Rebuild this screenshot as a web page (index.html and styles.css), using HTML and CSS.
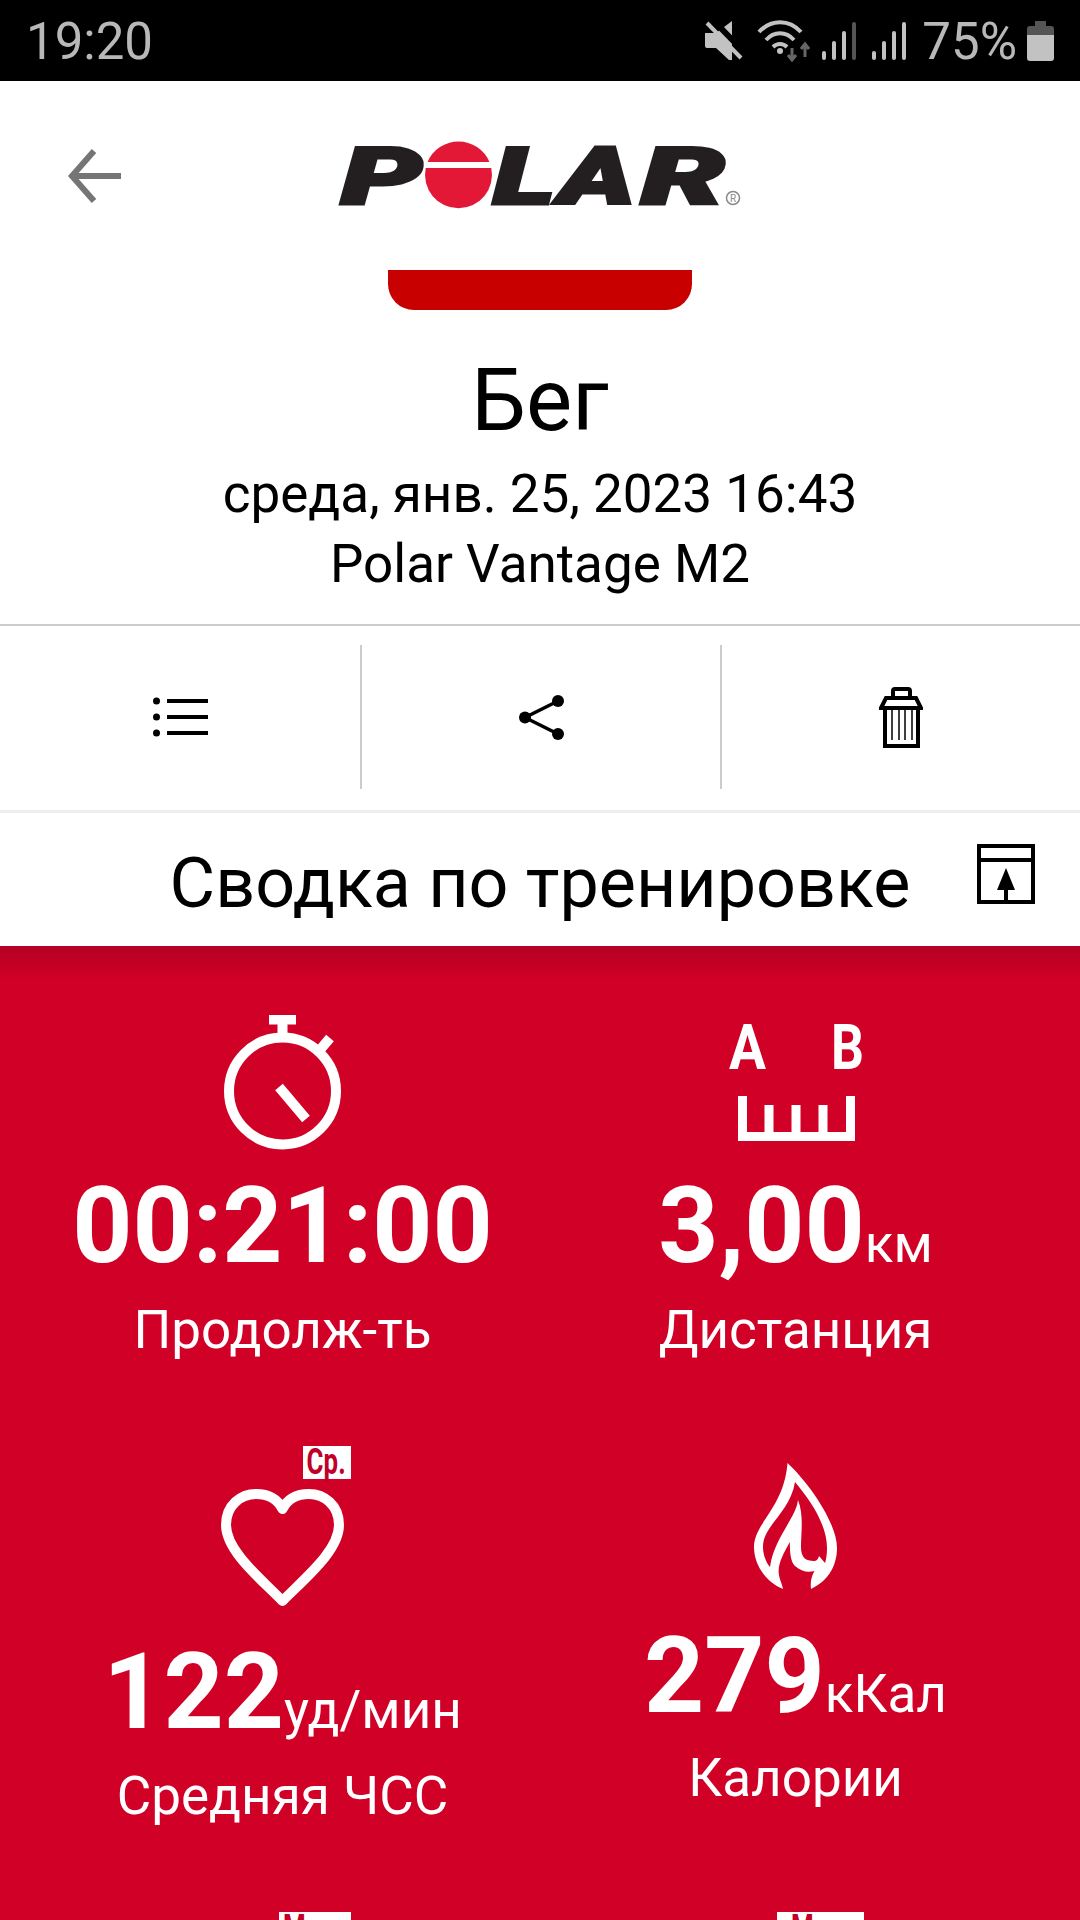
FILE: index.html
```html
<!DOCTYPE html>
<html lang="ru">
<head>
    <meta charset="utf-8">
    <title>Бег</title>
    <link rel="stylesheet" href="styles.css">
</head>
<body>
    <div class="status-bar">
        <span class="status-text">19:20</span>
        <div class="status-right">
            <svg class="ic-mute" viewBox="0 0 40 42">
                <path class="st-fill" d="M0 13 H11 L27 1 V40 L24 40 L11 28 H2 Q0 28 0 26 Z"/>
                <path class="st-cut" d="M6 -2 L40 33"/>
                <path class="st-line" d="M2 3 L36 38"/>
            </svg>
            <svg class="ic-wifi" viewBox="0 0 53 42">
                <path class="st-line" d="M2 12 C14 -1 32 -1 44 12"/>
                <path class="st-line" d="M9 20 C17 11 29 11 37 20"/>
                <path class="st-line" d="M16 27 C20 23 26 23 30 27"/>
                <circle class="st-fill" cx="23" cy="31" r="3"/>
                <path class="st-dark" d="M35 28 V40 M31 35 L35 40 L39 35"/>
                <path class="st-dark" d="M48 37 V24 M44 29 L48 24 L52 29"/>
            </svg>
            <svg class="ic-signal" viewBox="0 0 38 40">
                <rect class="st-fill" x="0" y="30" width="4" height="9" rx="2"/>
                <rect class="st-fill" x="10" y="20" width="4" height="19" rx="2"/>
                <rect class="st-fill" x="20" y="10" width="4" height="29" rx="2"/>
                <rect class="st-bar-dark" x="30" y="1" width="4" height="38" rx="2"/>
            </svg>
            <svg class="ic-signal" viewBox="0 0 38 40">
                <rect class="st-fill" x="0" y="30" width="4" height="9" rx="2"/>
                <rect class="st-fill" x="10" y="20" width="4" height="19" rx="2"/>
                <rect class="st-fill" x="20" y="10" width="4" height="29" rx="2"/>
                <rect class="st-fill" x="30" y="1" width="4" height="38" rx="2"/>
            </svg>
            <span class="status-text status-battery">75%</span>
            <svg class="ic-battery" viewBox="0 0 27 40">
                <path class="st-bar-dark" d="M8 0 H19 V5 H24 Q27 5 27 8 V14 H0 V8 Q0 5 3 5 H8 Z"/>
                <path class="st-fill" d="M0 14 H27 V37 Q27 40 24 40 H3 Q0 40 0 37 Z"/>
            </svg>
        </div>
    </div>

    <header class="top-bar">
        <svg class="back-icon" viewBox="0 0 54 54">
            <path d="M53 27 H5 M26 2 L4 27 L26 52"/>
        </svg>
        <svg class="logo" viewBox="-6 -20 416 106">
            <text class="logo-text" x="3" y="61" textLength="81" lengthAdjust="spacingAndGlyphs">P</text>
            <path class="logo-red" d="M89.600 19 A33.500 33.500 0 0 1 151.400 19 Z"/>
            <path class="logo-red" d="M87.700 25 H153.300 A33.500 33.500 0 1 1 87.700 25 Z"/>
            <text class="logo-text" x="155" y="61" textLength="62" lengthAdjust="spacingAndGlyphs">L</text>
            <text class="logo-text" x="221" y="61" textLength="76" lengthAdjust="spacingAndGlyphs">A</text>
            <text class="logo-text" x="303" y="61" textLength="84" lengthAdjust="spacingAndGlyphs">R</text>
            <circle class="logo-mark" cx="395" cy="55" r="6.500"/>
            <text class="logo-mark-text" x="395" y="59">R</text>
        </svg>
    </header>

    <div class="sport-tab"></div>

    <section class="session">
        <h1>Бег</h1>
        <p>среда, янв. 25, 2023 16:43</p>
        <p>Polar Vantage M2</p>
    </section>

    <div class="actions">
        <div class="action">
            <svg class="ic-list" viewBox="0 0 55 40">
                <circle cx="3.500" cy="4" r="3.500"/>
                <circle cx="3.500" cy="20" r="3.500"/>
                <circle cx="3.500" cy="36" r="3.500"/>
                <rect x="14" y="2" width="41" height="4"/>
                <rect x="14" y="18" width="41" height="4"/>
                <rect x="14" y="34" width="41" height="4"/>
            </svg>
        </div>
        <div class="action">
            <svg class="ic-share" viewBox="0 0 45 45">
                <path class="line" d="M39 6 L6 22.500 L39 39"/>
                <circle cx="6" cy="22.500" r="6"/>
                <circle cx="39" cy="6" r="6"/>
                <circle cx="39" cy="39" r="6"/>
            </svg>
        </div>
        <div class="action">
            <svg class="ic-trash" viewBox="0 0 44 61">
                <path class="line" d="M14 10 V4 Q14 2 16 2 H29 Q31 2 31 4 V10"/>
                <path class="line" d="M2 21 L7 11 H37 L42 21 Z"/>
                <path class="line" d="M6 21 V59 H39 V21"/>
                <path class="thin" d="M13 23 V53 M20 23 V53 M26 23 V53 M33 23 V53"/>
            </svg>
        </div>
    </div>

    <div class="summary-head">
        <h2>Сводка по тренировке</h2>
        <svg class="ic-collapse" viewBox="0 0 58 60">
            <path class="line" d="M2 2 H56 V58 H2 Z M2 16 H56"/>
            <path class="fill" d="M29 24 L38 46 H31 V58 H27 V46 H20 Z"/>
        </svg>
    </div>

    <main class="stats">
        <div class="stat">
            <div class="stat-icon">
                <svg class="ic-watch" viewBox="0 0 117 135">
                    <circle class="line" cx="58.500" cy="76" r="53.500"/>
                    <path class="line" d="M45 4.500 H72 M58.500 9 V22 M95 36 L106 23 M55 72 L82 104"/>
                </svg>
            </div>
            <div class="stat-value">00:21:00</div>
            <div class="stat-label">Продолж-ть</div>
        </div>
        <div class="stat">
            <div class="stat-icon">
                <svg class="ic-ab" viewBox="-10 -15 150 132">
                    <text x="0" y="45" textLength="37" lengthAdjust="spacingAndGlyphs">A</text>
                    <text x="102" y="45" textLength="33" lengthAdjust="spacingAndGlyphs">B</text>
                    <path class="line" d="M13.500 72 V112.500 H121.500 V72 M40 81 V112 M67 81 V112 M94 81 V112"/>
                </svg>
            </div>
            <div class="stat-value">3,00<span class="unit">км</span></div>
            <div class="stat-label">Дистанция</div>
        </div>

        <div class="stat">
            <div class="badge badge-avg"><span>Ср.</span></div>
            <div class="stat-icon stat-icon-heart">
                <svg class="ic-heart" viewBox="0 0 123 117">
                    <path class="line" d="M61.500 112 C40 90 5 62 5 36 C5 16 20 5 35 5 C48 5 57 11 61.500 20 C66 11 75 5 88 5 C103 5 118 16 118 36 C118 62 83 90 61.500 112 Z"/>
                </svg>
            </div>
            <div class="stat-value">122<span class="unit">уд/мин</span></div>
            <div class="stat-label">Средняя ЧСС</div>
        </div>
        <div class="stat">
            <div class="stat-icon stat-icon-flame">
                <svg class="ic-flame" viewBox="0 0 84 127">
                    <path class="flame" d="M33.500 0 C55 20 83 60 83 85 C83 105 72 119 57 126 C56 118 58 112 60.500 108 C53 110 47 108 41 103 C36 98 36 88 35.800 79 C30 90 25 98 24.600 108 C24.600 115 28 120 29 126 C12 119 0 102 0 84 C0 60 30 45 33.500 0 Z M41 19 C57 38 73 62 73 85 C73 92 72 97 71 100 C69 98 67 95 65 93 C64 97 62 98 60 98 C52 98 47 95 47 84 C47 70 50 52 44 37 C42 55 20 75 16 104 C11 98 9 90 9 84 C9 62 36 50 41 19 Z"/>
                </svg>
            </div>
            <div class="stat-value">279<span class="unit">кКал</span></div>
            <div class="stat-label">Калории</div>
        </div>

        <div class="stat">
            <div class="badge badge-max-left"><span>Макс.</span></div>
        </div>
        <div class="stat">
            <div class="badge badge-max-right"><span>Макс.</span></div>
        </div>
    </main>
</body>
</html>
```

FILE: styles.css
```css
html, body {
    margin: 0;
    padding: 0;
    height: 1920px;
    overflow: hidden;
}

body {
    font-family: Roboto, "Liberation Sans", sans-serif;
    background-color: #fff;
    color: #000;
}

svg {
    display: block;
}

/* status bar */
.status-bar {
    height: 81px;
    background-color: #000;
    display: flex;
    justify-content: space-between;
    align-items: center;
    padding: 0 26px 0 26px;
}

.status-text {
    margin-top: 2px;
    font-size: 51px;
    line-height: 79px;
    color: #b8b8b8;
}

.status-battery {
    margin-right: -2px;
}

.status-right {
    display: flex;
    align-items: center;
    gap: 12px;
}

.ic-mute {
    width: 40px;
    height: 42px;
}

.ic-wifi {
    width: 53px;
    height: 42px;
}

.ic-signal {
    width: 38px;
    height: 40px;
}

.ic-battery {
    width: 27px;
    height: 40px;
}

.st-fill {
    fill: #c2c2c2;
}

.st-bar-dark {
    fill: #555;
}

.st-cut {
    stroke: #000;
    stroke-width: 6;
    fill: none;
}

.st-line {
    stroke: #c2c2c2;
    stroke-width: 4;
    fill: none;
}

.st-dark {
    stroke: #666;
    stroke-width: 3;
    fill: none;
}

/* header */
.top-bar {
    height: 189px;
    display: grid;
    grid-template-columns: 1fr auto 1fr;
    align-items: center;
}

.back-icon {
    width: 54px;
    height: 54px;
    margin-left: 68px;
}

.back-icon path {
    stroke: #757575;
    stroke-width: 6;
    fill: none;
}

.logo {
    width: 416px;
    height: 106px;
    margin-top: 1px;
}

.logo-text {
    font-size: 80px;
    font-weight: 900;
    font-style: italic;
    fill: #231f20;
    stroke: #231f20;
    stroke-width: 3;
}

.logo-red {
    fill: #e31837;
}

.logo-mark {
    fill: none;
    stroke: #8a8a8a;
    stroke-width: 1.5;
}

.logo-mark-text {
    font-size: 10px;
    fill: #8a8a8a;
    text-anchor: middle;
}

.sport-tab {
    width: 304px;
    height: 40px;
    margin: 0 auto;
    background-color: #c80000;
    border-radius: 0 0 26px 26px;
}

/* session info */
.session {
    padding: 45px 0 25px;
    text-align: center;
}

.session h1 {
    margin: 0 0 14px;
    font-size: 87px;
    line-height: 90px;
    font-weight: 400;
}

.session p {
    margin: 0;
    font-size: 53px;
    line-height: 70px;
}

/* action row */
.actions {
    display: grid;
    grid-template-columns: 360px 360px 360px;
    padding: 19px 0 21px;
    border-top: 2px solid #ccc;
    border-bottom: 3px solid #eee;
}

.action {
    height: 144px;
    display: flex;
    justify-content: center;
    align-items: center;
    border-left: 2px solid #ccc;
}

.action:first-child {
    border-left: none;
}

.ic-list {
    width: 55px;
    height: 40px;
}

.ic-share {
    width: 45px;
    height: 45px;
}

.ic-trash {
    width: 44px;
    height: 61px;
}

.ic-share .line {
    stroke: #000;
    stroke-width: 3.5;
    fill: none;
}

.ic-trash .line {
    stroke: #000;
    stroke-width: 4;
    fill: none;
}

.ic-trash .thin {
    stroke: #000;
    stroke-width: 1.5;
    fill: none;
}

/* summary title */
.summary-head {
    height: 133px;
    display: grid;
    grid-template-columns: 1fr auto 1fr;
    align-items: center;
}

.summary-head h2 {
    grid-column: 2;
    margin: 8px 0 0;
    font-size: 70px;
    line-height: 125px;
    font-weight: 400;
    white-space: nowrap;
}

.ic-collapse {
    width: 58px;
    height: 60px;
    justify-self: end;
    margin-right: 45px;
    margin-top: -12px;
}

.ic-collapse .line {
    stroke: #000;
    stroke-width: 4;
    fill: none;
}

/* red stats area */
.stats {
    height: 905px;
    padding: 69px 28px 0 26px;
    display: grid;
    grid-template-columns: 513px 513px;
    row-gap: 86px;
    align-content: start;
    align-items: start;
    background: linear-gradient(to bottom, #b40023 0, #d00027 34px);
    color: #fff;
}

.stat {
    display: flex;
    flex-direction: column;
    align-items: center;
}

.stat-icon {
    height: 162px;
}

.stat-icon-heart {
    height: 154px;
    margin-top: 10px;
}

.stat-icon-flame {
    height: 164px;
    margin-top: 17px;
}

.ic-watch {
    width: 117px;
    height: 135px;
}

.ic-ab {
    width: 150px;
    height: 132px;
    margin: -6px 4px 0 0;
}

.ic-ab text {
    font-size: 63px;
    font-weight: 700;
    fill: #fff;
}

.ic-heart {
    width: 123px;
    height: 117px;
}

.ic-flame {
    width: 84px;
    height: 127px;
}

.ic-watch .line, .ic-heart .line {
    stroke: #fff;
    stroke-width: 10;
    fill: none;
    stroke-linejoin: round;
}

.ic-ab .line {
    stroke: #fff;
    stroke-width: 9;
    fill: none;
}

.flame {
    fill: #fff;
    fill-rule: evenodd;
}

.stat-value {
    font-size: 105px;
    line-height: 100px;
    font-weight: 700;
    white-space: nowrap;
}

.unit {
    font-size: 53px;
    line-height: 1;
    font-weight: 400;
}

.stat-label {
    margin-top: 23px;
    font-size: 53px;
    line-height: 60px;
}

.stat-icon-flame ~ .stat-label {
    margin-top: 21px;
}

.badge {
    height: 33px;
    background-color: #fff;
    color: #c00028;
    font-size: 36px;
    line-height: 33px;
    font-weight: 700;
    text-align: center;
    white-space: nowrap;
}

.badge span {
    display: inline-block;
    transform: scaleX(0.72);
}

.badge-avg {
    width: 48px;
    margin-left: 88px;
}

.badge-avg span {
    margin: 0 -7px;
}

.badge-max-left {
    width: 72px;
    margin-left: 64px;
}

.badge-max-left span {
    margin: 0 -10px;
}

.badge-max-right {
    width: 87px;
    margin-left: 49px;
}
```
